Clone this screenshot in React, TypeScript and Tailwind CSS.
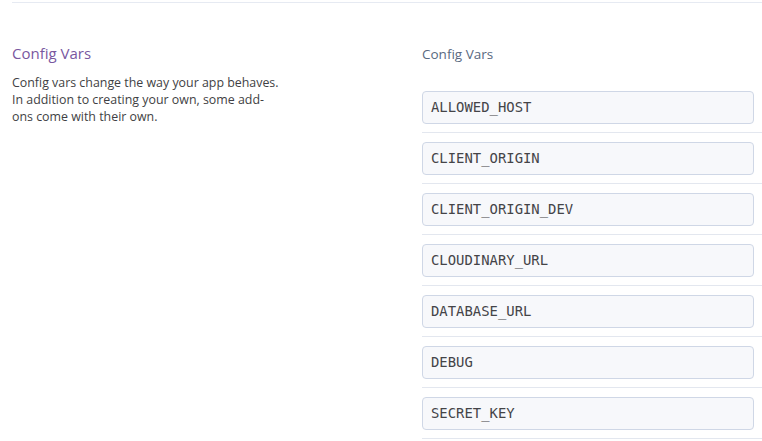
const vars = [
  "ALLOWED_HOST",
  "CLIENT_ORIGIN",
  "CLIENT_ORIGIN_DEV",
  "CLOUDINARY_URL",
  "DATABASE_URL",
  "DEBUG",
  "SECRET_KEY",
];

export default function App() {
  return (
    <div className="min-h-screen bg-white pl-3 pt-[2px] font-['Open_Sans',sans-serif]">
      <div className="flex border-t border-[#e6eaf2] pt-[40px]">
        <div className="w-[410px] shrink-0">
          <h2 className="text-[15px] leading-5 text-[#79589f]">Config Vars</h2>
          <p className="mt-[11px] w-[290px] text-[12.4px] leading-[17px] text-[#3f3f44]">
            Config vars change the way your app behaves.
            <br />
            In addition to creating your own, some add-
            <br />
            ons come with their own.
          </p>
        </div>
        <div className="flex-1">
          <p className="mt-[1px] text-[13.5px] leading-5 text-[#596981]">Config Vars</p>
          <div className="mt-[27px]">
            {vars.map((name) => (
              <div className="mb-[9px] border-b border-[#e3e7ef] pb-[8px]" key={name}>
                <div className="mr-[8px] flex h-[33px] items-center rounded-[4px] border border-[#cfd7e6] bg-[#f7f8fb] px-[8px] font-['DejaVu_Sans_Mono',monospace] text-[13.9px] text-[#444448]">
                  {name}
                </div>
              </div>
            ))}
          </div>
        </div>
      </div>
    </div>
  );
}
